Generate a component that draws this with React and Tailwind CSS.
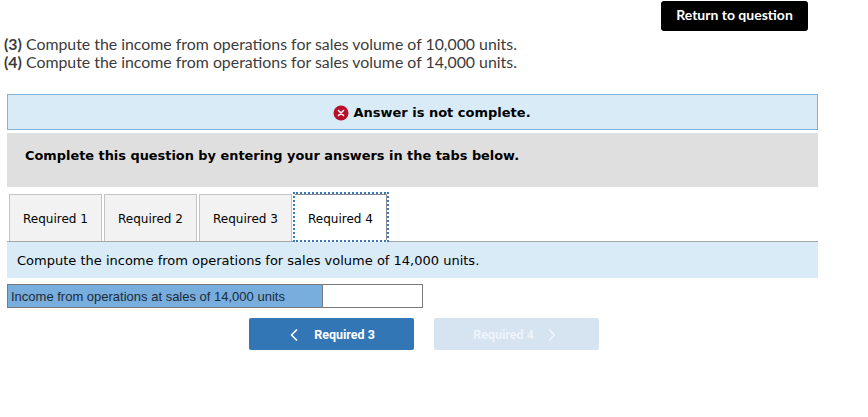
import React from "react";
import { ChevronLeft, ChevronRight } from "lucide-react";

const verdana = "font-['DejaVu_Sans',sans-serif]";

const App = () => {
  const tabs = ["Required 1", "Required 2", "Required 3"];

  return (
    <div className="w-[868px] h-[417px] bg-white overflow-hidden pt-px font-['Lato',sans-serif]">
      <div className="flex justify-end pr-[60px]">
        <button className="w-[147px] h-[30px] pb-[3px] bg-black text-white rounded-[3px] text-[14px] font-bold font-['Lato',sans-serif]">
          Return to question
        </button>
      </div>

      <div className="mt-[4px] pl-[4px] text-[15.87px] leading-[18px] text-[#3b3b3b]">
        <p><b>(3)</b> Compute the income from operations for sales volume of 10,000 units.</p>
        <p><b>(4)</b> Compute the income from operations for sales volume of 14,000 units.</p>
      </div>

      <div className="ml-[7px] w-[811px] mt-[23px]">
        {/* Answer status */}
        <div className={`h-[36px] pl-[39px] pt-[2px] bg-[#d8ebf7] border border-[#7fb2dd] flex items-center justify-center gap-[4px] text-[13px] font-bold text-black ${verdana}`}>
          <svg width="16" height="16" viewBox="0 0 16 16">
            <circle cx="8" cy="8" r="7.5" fill="#b8102a" />
            <path d="M5.5 5.5l5 5M10.5 5.5l-5 5" stroke="#fff" strokeWidth="1.6" strokeLinecap="round" />
          </svg>
          <span>Answer is not complete.</span>
        </div>

        <div className={`mt-[3px] h-[54px] bg-[#dfdfdf] pl-[18px] pt-[14px] text-[12.9px] leading-[18px] font-bold text-black ${verdana}`}>
          Complete this question by entering your answers in the tabs below.
        </div>

        {/* Tabs */}
        <div className={`mt-[5px] h-[49px] flex items-start pt-[2px] pl-[2px] gap-[2px] text-[12px] text-black ${verdana}`}>
          {tabs.map((t) => (
            <div key={t} className="w-[93px] h-[47px] pt-[2px] bg-[#f2f2f2] border border-[#c4c4c4] border-b-0 flex items-center justify-center">
              {t}
            </div>
          ))}
          <div className="relative z-10 w-[96px] h-[50px] -mt-[2px] -ml-[1px] bg-white border-2 border-dotted border-[#3a78b8]">
            <div className="h-full pt-[2px] border-t border-r border-[#8c8c8c] flex items-center justify-center">
              Required 4
            </div>
          </div>
        </div>
        <div className={`h-[37px] pt-[2px] bg-[#d8ebf7] border-t border-[#a6a6a6] flex items-center pl-[10px] text-[13px] text-black ${verdana}`}>
          Compute the income from operations for sales volume of 14,000 units.
        </div>

        {/* Answer row */}
        <div className="mt-[6px] w-[416px] h-[24px] flex border border-[#7a7a7a] font-['Liberation_Sans',sans-serif] text-[13px] text-[#1c2a38]">
          <div className="w-[315px] pt-[2px] bg-[#77aedd] border-r border-[#7a7a7a] pl-[3px] flex items-center">
            Income from operations at sales of 14,000 units
          </div>
          <div className="flex-1 bg-white" />
        </div>

        {/* Prev / next */}
        <div className="mt-[10px] ml-[242px] flex gap-[20px] text-[12.5px] font-bold text-white font-['Roboto',sans-serif]">
          <button className="w-[165px] h-[32px] pt-[1px] bg-[#3376b5] rounded-[2px] flex items-center justify-center gap-[10px] pr-[4px]">
            <ChevronLeft size={20} strokeWidth={2} />
            <span className="pt-[2px]">Required 3</span>
          </button>
          <button className="w-[165px] h-[32px] pt-[1px] bg-[#d6e3f0] rounded-[2px] flex items-center justify-center gap-[8px] pl-[2px] text-[#eef4fa]">
            <span className="pt-[2px]">Required 4</span>
            <ChevronRight size={20} strokeWidth={2} />
          </button>
        </div>
      </div>
    </div>
  );
};

export default App;
